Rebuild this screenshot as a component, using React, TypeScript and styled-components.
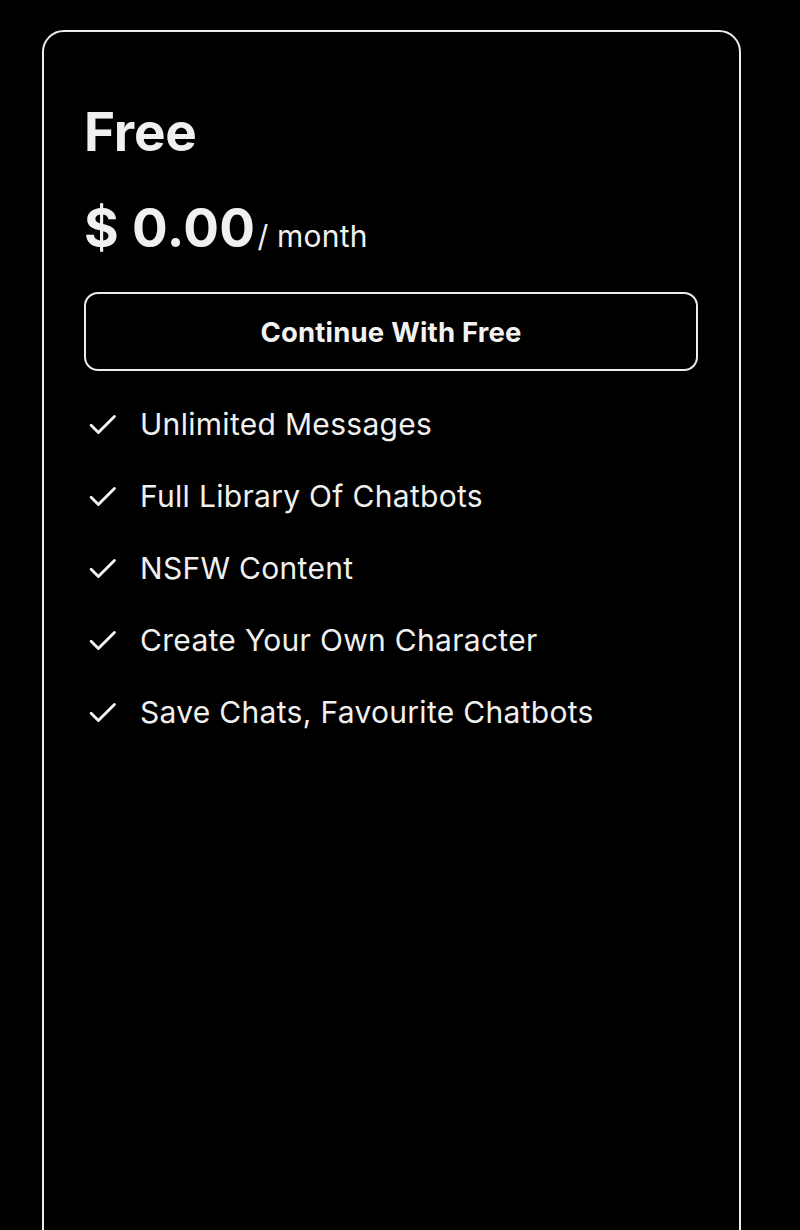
import React from 'react'
import styled, { createGlobalStyle } from 'styled-components'

const GlobalStyle = createGlobalStyle`
    html, body {
        margin: 0;
        padding: 0;
        background: #000;
        overflow: hidden;
    }
    body {
        font-family: "Inter", "Noto Sans", sans-serif;
        color: #f2f2f2;
    }
`

const SPage = styled.div`
    background: #000;
    min-height: 1230px;
    padding: 30px 0 0 42px;
    box-sizing: border-box;
`

const SCard = styled.div`
    width: 699px;
    min-height: 1260px;
    box-sizing: border-box;
    border: 2px solid #ececec;
    border-radius: 22px;
    padding: 68px 41px 40px 40px;
    display: flex;
    flex-direction: column;
`

const STitle = styled.h2`
    margin: 0;
    font-size: 53px;
    line-height: 64px;
    font-weight: 700;
    color: #f0f0f0;
    letter-spacing: -0.2px;
`

const SPriceRow = styled.div`
    display: flex;
    align-items: baseline;
    margin-top: 34px;
`

const SPrice = styled.span`
    font-size: 53px;
    line-height: 60px;
    font-weight: 700;
    color: #f0f0f0;
    letter-spacing: 0.4px;
`

const SPeriod = styled.span`
    font-size: 30px;
    font-weight: 400;
    color: #f0f0f0;
    margin-left: 2px;
    letter-spacing: 0.2px;
`

const SButton = styled.button`
    margin-top: 34px;
    height: 79px;
    width: 100%;
    background: transparent;
    border: 2px solid #ececec;
    border-radius: 14px;
    color: #f2f2f2;
    font-family: "Inter", "Roboto", sans-serif;
    font-size: 27.5px;
    font-weight: 700;
    letter-spacing: 0.2px;
    cursor: pointer;
`

const SList = styled.ul`
    list-style: none;
    margin: 31px 0 0 0;
    padding: 0;
    display: flex;
    flex-direction: column;
    gap: 28px;
`

const SItem = styled.li`
    display: flex;
    align-items: center;
    height: 44px;
    font-size: 30px;
    font-weight: 400;
    letter-spacing: 0.3px;
    color: #f0f0f0;
`

const SCheck = styled.svg`
    width: 35px;
    height: 35px;
    margin-left: 2px;
    margin-right: 19px;
    flex-shrink: 0;
`

const features = [
    'Unlimited Messages',
    'Full Library Of Chatbots',
    'NSFW Content',
    'Create Your Own Character',
    'Save Chats, Favourite Chatbots',
]

const Check = () => (
    <SCheck viewBox="0 0 24 24" fill="none" stroke="#f2f2f2" strokeWidth={2} strokeLinecap="round" strokeLinejoin="round">
        <path d="M3.5 12.5l5 5 11-11" />
    </SCheck>
)

const App = () => {
    return (
        <>
            <GlobalStyle />
            <SPage>
                <SCard>
                    <STitle>Free</STitle>
                    <SPriceRow>
                        <SPrice>$ 0.00</SPrice>
                        <SPeriod>/ month</SPeriod>
                    </SPriceRow>
                    <SButton>Continue With Free</SButton>
                    <SList>
                        {features.map((f) => (
                            <SItem key={f}>
                                <Check />
                                {f}
                            </SItem>
                        ))}
                    </SList>
                </SCard>
            </SPage>
        </>
    )
}

export default App
